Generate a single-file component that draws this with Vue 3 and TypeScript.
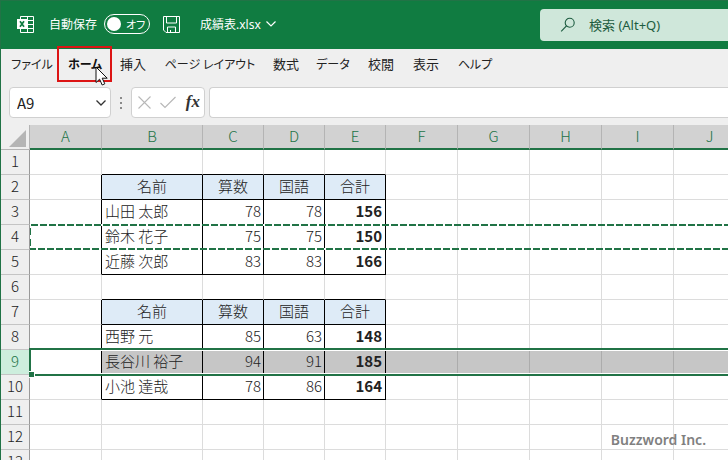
<script setup lang="ts">
import { ref } from 'vue'

interface Column {
  name: string
  kind: 'wide' | 'name' | 'score'
}

interface Row {
  n: number
  kind: 'blank' | 'head' | 'data'
  cells: string[]
}

const ROW_HEIGHT = 25
const COPIED_ROW = 4
const SELECTED_ROW = 9

const tabs = ['ファイル', 'ホーム', '挿入', 'ページ レイアウト', '数式', 'データ', '校閲', '表示', 'ヘルプ']
const isKana = (label: string) => /^[ァ-ヶー ]+$/.test(label)
const activeTab = ref('ホーム')
const autoSave = ref(false)
const nameBox = ref('A9')
const formula = ref('')
const query = ref('')

const columns: Column[] = [
  { name: 'A', kind: 'wide' },
  { name: 'B', kind: 'name' },
  { name: 'C', kind: 'score' },
  { name: 'D', kind: 'score' },
  { name: 'E', kind: 'score' },
  { name: 'F', kind: 'wide' },
  { name: 'G', kind: 'wide' },
  { name: 'H', kind: 'wide' },
  { name: 'I', kind: 'wide' },
  { name: 'J', kind: 'wide' },
]

const headings = ['名前', '算数', '国語', '合計']
const content: Record<number, string[]> = {
  2: headings,
  3: ['山田 太郎', '78', '78', '156'],
  4: ['鈴木 花子', '75', '75', '150'],
  5: ['近藤 次郎', '83', '83', '166'],
  7: headings,
  8: ['西野 元', '85', '63', '148'],
  9: ['長谷川 裕子', '94', '91', '185'],
  10: ['小池 達哉', '78', '86', '164'],
}

const rows: Row[] = Array.from({ length: 13 }, (_, i) => {
  const n = i + 1
  const values = content[n]
  return {
    n,
    kind: !values ? 'blank' : values === headings ? 'head' : 'data',
    cells: columns.map((_, c) => values?.[c - 1] ?? ''),
  }
})

const filled = (n: number, c: number) => n in content && c >= 1 && c <= 4

function cellClass(row: Row, c: number) {
  const inside = filled(row.n, c)
  return {
    'line-right': inside || filled(row.n, c + 1),
    'line-bottom': inside || filled(row.n + 1, c),
    heading: inside && row.kind === 'head',
    text: inside && row.kind === 'data' && c === 1,
    number: inside && row.kind === 'data' && c > 1,
    total: inside && row.kind === 'data' && c === 4,
    selected: row.n === SELECTED_ROW && c > 0,
  }
}

// Vertical place of the frame round a row; frames start above the row's own box.
const frameTop = (n: number, above: number) => ({ top: `${n * ROW_HEIGHT - above}px` })
</script>

<template>
  <div class="app">
    <header class="titlebar">
      <svg class="logo" viewBox="0 0 17 17" aria-hidden="true">
        <path d="M3.500 4V.500h13v16h-13V13M9 4.500h7.500M9 8.500h7.500M9 12.500h7.500M10.500 .500v16" fill="none" stroke="#fff" />
        <rect x="0" y="3" width="10" height="10" fill="#fff" />
        <path d="M3 5.200l4 5.600M7 5.200l-4 5.600" stroke="#107c41" stroke-width="1.700" />
      </svg>
      <label class="autosave" for="autosave">自動保存</label>
      <label class="switch">
        <input id="autosave" v-model="autoSave" type="checkbox" role="switch" />
        <span>オフ</span>
      </label>
      <button class="save" type="button" aria-label="保存">
        <svg viewBox="0 0 17 17" aria-hidden="true">
          <path d="M.500 .500h16v16H3l-2.500-2.500zM3.500 .500v6.500h10V.500M4.500 16.500V11h8v5.500M7.500 16.500V14" fill="none" stroke="#fff" />
        </svg>
      </button>
      <button class="file" type="button">
        <span>成績表.xlsx</span>
        <svg viewBox="0 0 10 6" aria-hidden="true"><path d="M.500 .500L5 5 9.500 .500" fill="none" stroke="#fff" stroke-width="1.200" /></svg>
      </button>
      <label class="search">
        <svg viewBox="0 0 16 16" aria-hidden="true">
          <circle cx="9.700" cy="5.700" r="4.500" fill="none" stroke="#1d5c40" stroke-width="1.100" />
          <path d="M6.500 8.900L1.200 14.400" stroke="#1d5c40" stroke-width="1.200" />
        </svg>
        <input v-model="query" type="text" placeholder="検索 (Alt+Q)" aria-label="検索" />
      </label>
    </header>

    <section class="ribbon">
      <nav class="tabs">
        <button
          v-for="tab in tabs"
          :key="tab"
          type="button"
          :class="{ active: tab === activeTab, kana: isKana(tab) }"
          @click="activeTab = tab"
        >
          {{ tab }}
          <template v-if="tab === 'ホーム'">
            <span class="marker"></span>
            <svg class="pointer" viewBox="0 0 13 20" aria-hidden="true">
              <path d="M1 1v15.500l3.600-3.300 2.600 5.800 2.600-1.200-2.600-5.600h5z" fill="#fff" stroke="#111" />
            </svg>
          </template>
        </button>
      </nav>
      <div class="formula-bar">
        <div class="box name-box">
          <input v-model="nameBox" type="text" aria-label="名前ボックス" />
          <button type="button" aria-label="名前の一覧">
            <svg width="10" height="6" viewBox="0 0 10 6" aria-hidden="true"><path d="M.500 .500L5 5 9.500 .500" fill="none" stroke="#333" stroke-width="1.300" /></svg>
          </button>
        </div>
        <svg class="dots" viewBox="0 0 2 12" aria-hidden="true"><path d="M0 0h2v2H0zM0 5h2v2H0zM0 10h2v2H0z" fill="#8a8a8a" /></svg>
        <div class="box actions">
          <button type="button" aria-label="キャンセル">
            <svg width="13" height="13" viewBox="0 0 13 13" aria-hidden="true"><path d="M.500 .500l12 12M12.500 .500l-12 12" stroke="#b8b8b8" stroke-width="1.100" /></svg>
          </button>
          <button type="button" aria-label="入力">
            <svg width="16" height="13" viewBox="0 0 16 13" aria-hidden="true"><path d="M.500 7l4.500 4.500L15.500 1" fill="none" stroke="#b8b8b8" stroke-width="1.200" /></svg>
          </button>
          <button class="fx" type="button" aria-label="関数の挿入">fx</button>
        </div>
        <input v-model="formula" class="box formula" type="text" aria-label="数式バー" />
      </div>
    </section>

    <main class="sheet">
      <table>
        <colgroup>
          <col class="col-index" />
          <col v-for="col in columns" :key="col.name" :class="`col-${col.kind}`" />
        </colgroup>
        <thead>
          <tr>
            <td class="corner">
              <svg viewBox="0 0 17 17" aria-hidden="true"><path d="M17 0v17H0z" fill="#b5b5b5" /></svg>
            </td>
            <th v-for="col in columns" :key="col.name" scope="col">{{ col.name }}</th>
          </tr>
        </thead>
        <tbody>
          <tr v-for="row in rows" :key="row.n">
            <th scope="row" :class="{ current: row.n === SELECTED_ROW }">{{ row.n }}</th>
            <td v-for="(cell, c) in row.cells" :key="c" :class="cellClass(row, c)">{{ cell }}</td>
          </tr>
        </tbody>
      </table>
      <div class="copied" :style="frameTop(COPIED_ROW, 1)"></div>
      <div class="selection" :style="frameTop(SELECTED_ROW, 2)"></div>
      <p class="credit">Buzzword Inc.</p>
    </main>
  </div>
</template>

<style>
body {
  margin: 0;
}
</style>

<style scoped>
.app {
  box-sizing: border-box;
  display: flex;
  flex-direction: column;
  height: 100vh;
  overflow: hidden;
  border-left: 1px solid #217346;
  background: #fff;
  color: #222;
  font-family: "Noto Sans CJK JP", sans-serif;
  font-size: 13px;
}

button,
input {
  margin: 0;
  padding: 0;
  border: 0;
  background: none;
  color: inherit;
  font: inherit;
}

svg {
  display: block;
}

.titlebar {
  box-sizing: border-box;
  display: flex;
  flex: none;
  align-items: center;
  height: 49px;
  padding: 0 0 2px 16px;
  border-top: 1px solid #217346;
  background: #107c41;
  color: #fff;
  font-family: "Noto Sans", "Noto Sans CJK JP", sans-serif;
}

.logo {
  width: 17px;
  height: 17px;
  margin-right: 15px;
}

.autosave {
  margin-right: 7px;
  font-size: 12px;
}

.switch {
  box-sizing: border-box;
  display: flex;
  align-items: center;
  gap: 5px;
  width: 46px;
  height: 20px;
  margin-right: 13px;
  padding-left: 2px;
  border: 1px solid #fff;
  border-radius: 10px;
  font-size: 11px;
  font-feature-settings: "palt";
  white-space: nowrap;
}

.switch input {
  flex: none;
  width: 14px;
  height: 14px;
  border-radius: 50%;
  background: #fff;
  appearance: none;
}

.save {
  margin-right: 20px;
}

.save svg {
  width: 17px;
  height: 17px;
}

.file {
  display: flex;
  align-items: center;
  gap: 5px;
  font-size: 12px;
  white-space: nowrap;
}

.file svg {
  width: 10px;
  height: 6px;
}

.search {
  display: flex;
  align-items: center;
  gap: 13px;
  box-sizing: border-box;
  width: 188px;
  height: 32px;
  margin-top: 2px;
  margin-left: auto;
  padding-left: 20px;
  border-radius: 4px 0 0 4px;
  background: #cfe7da;
  color: #1d5c40;
}

.search svg {
  flex: none;
  width: 16px;
  height: 16px;
}

.search input {
  flex: 1;
  min-width: 0;
}

.search input::placeholder {
  color: #1d5c40;
  opacity: 1;
}

.ribbon {
  flex: none;
  height: 76px;
  background: #efefef;
}

.tabs {
  display: grid;
  grid-template-columns: 56px 50px 46px 108px 44px 50px 46px 44px 54px;
  height: 38px;
  padding-left: 3px;
}

.tabs button {
  position: relative;
  height: 31px;
  padding-bottom: 2px;
  font-feature-settings: "palt";
  white-space: nowrap;
}

.tabs .kana {
  font-size: 12px;
}

.tabs .active {
  color: #111;
  font-weight: 700;
}

.marker {
  position: absolute;
  inset: -3px -2px -2px -3px;
  z-index: 2;
  border: 2px solid #dc1414;
}

.pointer {
  position: absolute;
  top: 17px;
  left: 35px;
  z-index: 3;
  width: 13px;
  height: 20px;
}

.formula-bar {
  display: flex;
  align-items: center;
  height: 31px;
  padding-left: 8px;
}

.box {
  box-sizing: border-box;
  height: 31px;
  border: 1px solid #d0d0d0;
  border-radius: 4px;
  background: #fff;
}

.name-box {
  display: flex;
  align-items: center;
  width: 102px;
  padding: 0 4px 0 7px;
  font-size: 15px;
}

.name-box input {
  flex: 1;
  min-width: 0;
}

.dots {
  width: 2px;
  height: 12px;
  margin: 0 9px;
}

.actions {
  display: flex;
  align-items: center;
  justify-content: space-between;
  width: 74px;
  margin-right: 4px;
  padding: 0 4px 0 6px;
}

.fx {
  padding-bottom: 2px;
  color: #333;
  font-family: "Liberation Serif", serif;
  font-size: 17px;
  font-style: italic;
  font-weight: 700;
  line-height: 20px;
}

.formula {
  flex: 1;
  min-width: 0;
  border-right: 0;
  border-radius: 4px 0 0 4px;
  padding-left: 8px;
}

.sheet {
  position: relative;
  flex: 1;
  min-height: 0;
  overflow: hidden;
}

table {
  width: 0;
  border-collapse: separate;
  border-spacing: 0;
  table-layout: fixed;
  font-size: 15px;
  font-weight: 300;
  line-height: 22px;
}

.col-index {
  width: 29px;
}

.col-wide {
  width: 72px;
}

.col-name {
  width: 101px;
}

.col-score {
  width: 61px;
}

th,
td {
  box-sizing: border-box;
  height: 25px;
  padding: 0 0 2px;
  border-right: 1px solid #dcdcdc;
  border-bottom: 1px solid #dcdcdc;
  font-weight: inherit;
  white-space: nowrap;
}

thead th {
  border-right-color: #b4b4b4;
  border-bottom: 2px solid #217346;
  background: #d2d2d2;
  color: #217346;
  line-height: 21px;
}

.corner {
  padding: 2px 0 0 8px;
  border-right-color: #b4b4b4;
  border-bottom-color: #b4b4b4;
  background: #efefef;
}

.corner svg {
  width: 17px;
  height: 17px;
}

tbody th {
  border-right-color: #999;
  border-bottom-color: #c4c4c4;
  background: #efefef;
}

tbody .current {
  background: #cdeedd;
  color: #217346;
}

.line-right {
  border-right-color: #000;
}

.line-bottom {
  border-bottom-color: #000;
}

.heading {
  background: #deebf7;
  text-align: center;
}

.text {
  padding-left: 3px;
}

.number {
  padding-right: 2px;
  text-align: right;
}

.total {
  padding-right: 3px;
  font-weight: 700;
}

.selected {
  background: #c6c6c6;
}

.selected:not(.line-right) {
  border-right-color: #acacac;
}

.copied {
  position: absolute;
  right: 0;
  left: 29px;
  height: 26px;
  background:
    repeating-linear-gradient(90deg, #fff 0 1px, #217346 1px 8px, #fff 8px 9px) 0 0 / 100% 2px no-repeat,
    repeating-linear-gradient(90deg, #217346 0 6px, #fff 6px 8px, #217346 8px 9px) 0 100% / 100% 2px no-repeat,
    repeating-linear-gradient(180deg, #fff 0 4px, #217346 4px 11px) 0 0 / 1px 100% no-repeat;
}

.selection {
  box-sizing: border-box;
  position: absolute;
  right: 0;
  left: 28px;
  height: 28px;
  border: 2px solid #217346;
  border-right: 0;
  box-shadow: inset 0 1px #fff, inset 0 -1px #fff;
}

.selection::after {
  position: absolute;
  bottom: -4px;
  left: -2px;
  width: 5px;
  height: 5px;
  border: 1px solid #fff;
  border-left: 0;
  background: #217346;
  content: "";
}

.credit {
  position: absolute;
  right: 22px;
  bottom: 10px;
  margin: 0;
  color: #808080;
  font-family: "Noto Sans", sans-serif;
  font-size: 14px;
  font-weight: 600;
  line-height: 20px;
}
</style>
